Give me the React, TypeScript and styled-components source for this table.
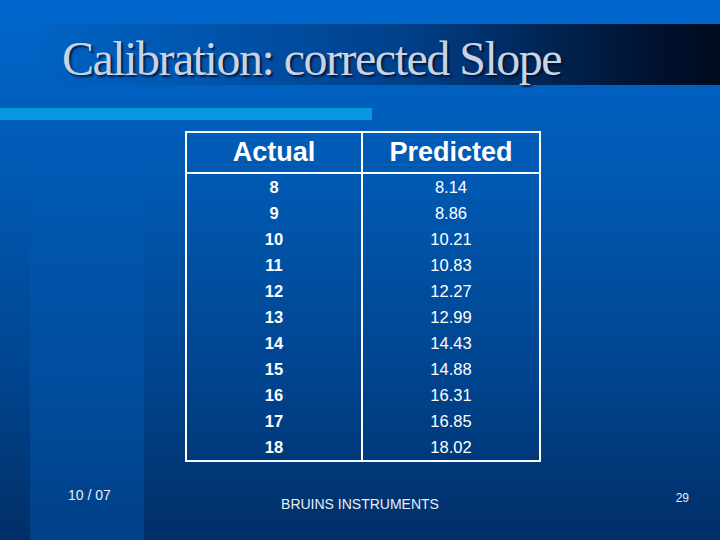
import React from "react";
import styled, { createGlobalStyle } from "styled-components";

const Global = createGlobalStyle`
  html, body { margin: 0; padding: 0; background: #00306a; }
  #root { width: 720px; height: 540px; }
`;

const Slide = styled.div`
  width: 720px;
  height: 540px;
  overflow: hidden;
  display: flex;
  flex-direction: column;
  font-family: "Liberation Sans", Arial, sans-serif;
  color: #ffffff;
  background:
    linear-gradient(180deg, rgba(0, 100, 200, 0) 0%, rgba(0, 100, 200, 0.3) 60%, rgba(0, 100, 200, 0.32) 100%)
      30px 120px / 114px 420px no-repeat,
    linear-gradient(180deg, #0067cd 0%, #0058b0 35%, #00448e 70%, #002f67 100%);
`;

const TitleBar = styled.div`
  margin: 24px 0 0 40px;
  height: 61px;
  display: flex;
  align-items: center;
  padding-left: 22px;
  background: linear-gradient(
    to right,
    rgba(0, 96, 190, 0.4) 0%,
    #0058b2 20%,
    #003f88 55%,
    #002452 75%,
    #001230 90%,
    #000c1e 100%
  );
`;

const Title = styled.h1`
  margin: 8px 0 0 0;
  font-family: "Liberation Serif", "Times New Roman", serif;
  font-weight: normal;
  font-size: 48px;
  letter-spacing: -1.5px;
  line-height: 1;
  color: #c9d3e2;
  text-shadow: 2px 2px 2px rgba(0, 10, 40, 0.75);
  white-space: nowrap;
`;

const AccentBar = styled.div`
  margin-top: 23px;
  width: 372px;
  height: 12px;
  background: #0897de;
`;

const DataTable = styled.div`
  margin: 11px 0 0 185px;
  width: 352px;
  display: grid;
  grid-template-columns: 1fr 1fr;
  border: 2px solid #ffffff;
`;

const Column = styled.div<{ $divider?: boolean }>`
  display: flex;
  flex-direction: column;
  border-right: ${(p) => (p.$divider ? "2px solid #ffffff" : "none")};
`;

const HeaderCell = styled.div`
  height: 39px;
  display: flex;
  align-items: center;
  justify-content: center;
  font-size: 27px;
  font-weight: bold;
  border-bottom: 2px solid #ffffff;
`;

const Cell = styled.div<{ $bold?: boolean }>`
  height: 26px;
  display: flex;
  align-items: center;
  justify-content: center;
  font-size: 16.5px;
  font-weight: ${(p) => (p.$bold ? "bold" : "normal")};
`;

const Footer = styled.div`
  margin-top: 25px;
  display: grid;
  grid-template-columns: 1fr auto 1fr;
  align-items: start;
`;

const FooterText = styled.div<{
  $size: number;
  $top: number;
  $align: "start" | "center" | "end";
  $padL?: number;
  $padR?: number;
}>`
  justify-self: ${(p) => p.$align};
  margin-top: ${(p) => p.$top}px;
  padding-left: ${(p) => p.$padL ?? 0}px;
  padding-right: ${(p) => p.$padR ?? 0}px;
  font-size: ${(p) => p.$size}px;
  line-height: ${(p) => p.$size + 2}px;
  color: #e8eef8;
  white-space: nowrap;
`;

const actual = [8, 9, 10, 11, 12, 13, 14, 15, 16, 17, 18];
const predicted = ["8.14", "8.86", "10.21", "10.83", "12.27", "12.99", "14.43", "14.88", "16.31", "16.85", "18.02"];

export default function App() {
  return (
    <>
      <Global />
      <Slide>
        <TitleBar>
          <Title>Calibration: corrected Slope</Title>
        </TitleBar>
        <AccentBar />
        <DataTable>
          <Column $divider>
            <HeaderCell>Actual</HeaderCell>
            {actual.map((v) => (
              <Cell key={v} $bold>
                {v}
              </Cell>
            ))}
          </Column>
          <Column>
            <HeaderCell>Predicted</HeaderCell>
            {predicted.map((v) => (
              <Cell key={v}>{v}</Cell>
            ))}
          </Column>
        </DataTable>
        <Footer>
          <FooterText $size={14} $top={0} $align="start" $padL={68}>
            10 / 07
          </FooterText>
          <FooterText $size={14} $top={9} $align="center">
            BRUINS INSTRUMENTS
          </FooterText>
          <FooterText $size={12} $top={4} $align="end" $padR={31}>
            29
          </FooterText>
        </Footer>
      </Slide>
    </>
  );
}
